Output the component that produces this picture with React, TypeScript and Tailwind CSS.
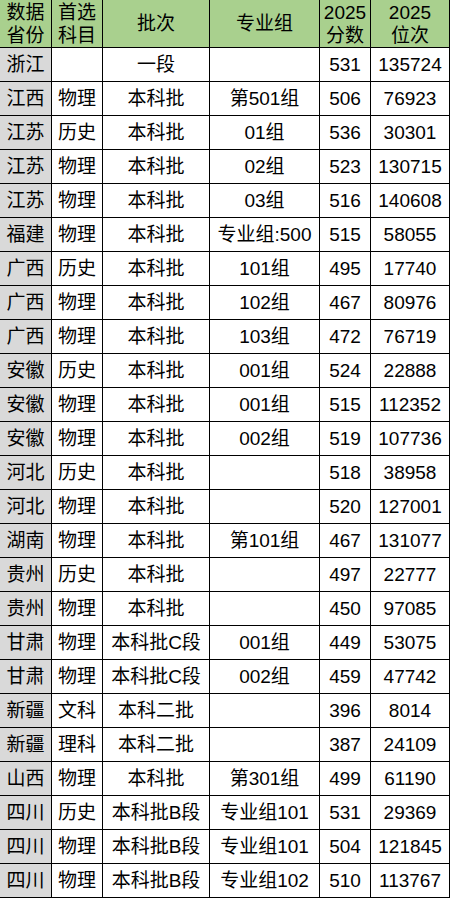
import React from "react";

const rows: string[][] = [
  ["浙江", "", "一段", "", "531", "135724"],
  ["江西", "物理", "本科批", "第501组", "506", "76923"],
  ["江苏", "历史", "本科批", "01组", "536", "30301"],
  ["江苏", "物理", "本科批", "02组", "523", "130715"],
  ["江苏", "物理", "本科批", "03组", "516", "140608"],
  ["福建", "物理", "本科批", "专业组:500", "515", "58055"],
  ["广西", "历史", "本科批", "101组", "495", "17740"],
  ["广西", "物理", "本科批", "102组", "467", "80976"],
  ["广西", "物理", "本科批", "103组", "472", "76719"],
  ["安徽", "历史", "本科批", "001组", "524", "22888"],
  ["安徽", "物理", "本科批", "001组", "515", "112352"],
  ["安徽", "物理", "本科批", "002组", "519", "107736"],
  ["河北", "历史", "本科批", "", "518", "38958"],
  ["河北", "物理", "本科批", "", "520", "127001"],
  ["湖南", "物理", "本科批", "第101组", "467", "131077"],
  ["贵州", "历史", "本科批", "", "497", "22777"],
  ["贵州", "物理", "本科批", "", "450", "97085"],
  ["甘肃", "物理", "本科批C段", "001组", "449", "53075"],
  ["甘肃", "物理", "本科批C段", "002组", "459", "47742"],
  ["新疆", "文科", "本科二批", "", "396", "8014"],
  ["新疆", "理科", "本科二批", "", "387", "24109"],
  ["山西", "物理", "本科批", "第301组", "499", "61190"],
  ["四川", "历史", "本科批B段", "专业组101", "531", "29369"],
  ["四川", "物理", "本科批B段", "专业组101", "504", "121845"],
  ["四川", "物理", "本科批B段", "专业组102", "510", "113767"],
];

const headers: string[][] = [
  ["数据", "省份"],
  ["首选", "科目"],
  ["批次"],
  ["专业组"],
  ["2025", "分数"],
  ["2025", "位次"],
];

export default function App() {
  return (
    <div
      className="w-[450px] h-[899px] bg-white text-black"
      style={{ fontFamily: '"Liberation Sans", Arial, "Noto Sans CJK SC", sans-serif' }}
    >
      <div className="grid grid-cols-[51px_50px_106px_109px_50px_78px] grid-rows-[47px_repeat(25,1fr)] gap-px bg-black pr-px pb-px h-[898px] w-[450px]">
        {headers.map((h, i) => (
          <div
            key={"h" + i}
            className="bg-[#a9d08e] flex flex-col items-center justify-center text-[19px] leading-[23px]"
          >
            {h.map((l, j) => (
              <span key={j}>{l}</span>
            ))}
          </div>
        ))}
        {rows.map((r, ri) =>
          r.map((c, ci) => (
            <div
              key={ri + "-" + ci}
              className={
                "flex items-center justify-center text-[19px] leading-none whitespace-nowrap " +
                (ci === 0 ? "bg-[#d9d9d9]" : "bg-white")
              }
            >
              {c}
            </div>
          ))
        )}
      </div>
    </div>
  );
}
